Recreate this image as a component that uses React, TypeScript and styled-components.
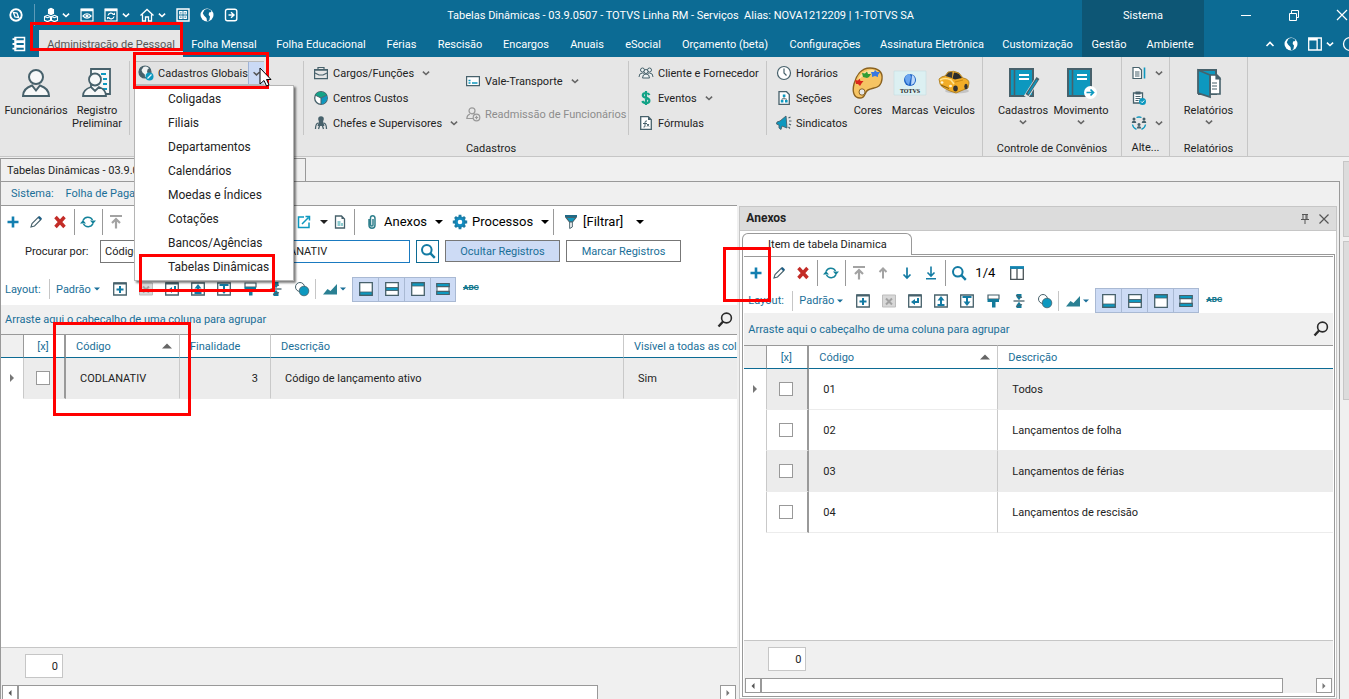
import React from "react";
import styled, { createGlobalStyle, css } from "styled-components";

const blue = "#0c6b94";
const link = "#1a6f98";
const teal = "#0d98bf";
const slate = "#47616b";
const green = "#12a387";
const uiFont = `Roboto, "Noto Sans", sans-serif`;

const GlobalStyle = createGlobalStyle`
  * { box-sizing: border-box; }
  body { margin: 0; background: #f0f0f0; color: #222; font: 11px/15px ${uiFont}; overflow: hidden; }
  button, input, select { font: inherit; color: inherit; margin: 0; padding: 0; }
  button { background: none; border: 0; white-space: nowrap; }
  svg { display: block; flex: none; overflow: visible; }
  ul { list-style: none; margin: 0; padding: 0; }
`;

/* ---------- icons ---------- */

const art: Record<string, React.ReactNode> = {
  compass: <g fill="none" stroke="#fff"><circle cx="8" cy="8" r="5.700" strokeWidth="1.900" /><path d="M5.300 5.300l3.700.8 1.700 4.600-3.700-.8z" strokeWidth="1.300" /></g>,
  cubes: <g stroke="#fff" strokeWidth="1.1" fill="none"><path d="M5.500 2.500L8 1.300l2.500 1.200v4L8 7.700 5.500 6.500z" fill="#fff" /><path d="M1.500 9.500L4.500 8.300l3 1.200v3.800L4.500 14.600l-3-1.300zM8.500 9.500l3-1.200 3 1.200v3.800l-3 1.300-3-1.300zM1.500 9.500l3 1.200 3-1.200M8.500 9.500l3 1.200 3-1.200" /></g>,
  eyeWin: <g fill="none" stroke="#fff" strokeWidth="1.2"><path d="M2 2h12v12H2z" /><path d="M2 3h12" strokeWidth="2.500" /><path d="M4 9q4-4.500 8 0q-4 4.500-8 0z" /><circle cx="8" cy="9" r="1" fill="#fff" /></g>,
  syncWin: <g fill="none" stroke="#fff" strokeWidth="1.2"><path d="M2 2h12v12H2z" /><path d="M2 3h12" strokeWidth="2.500" /><path d="M5 8.500a3 3 0 0 1 5.500-1M11 9.500a3 3 0 0 1-5.500 1" /><path d="M9 8h3V5.500zM7 10H4v2.500z" fill="#fff" stroke="none" /></g>,
  home: <g fill="none" stroke="#fff" strokeWidth="1.300"><path d="M1.500 8.500L8 2.500l6.500 6M3.500 7.500V14h3v-4h3v4h3V7.500" /></g>,
  grid: <g fill="none" stroke="#fff" strokeWidth="1.4"><path d="M2 2h12v12H2z" /><path d="M4.700 4.700h2.300V7H4.700zM9 4.700h2.300V7H9zM4.700 9h2.300v2.300H4.700zM9 9h2.300v2.300H9z" strokeWidth="1.200" /></g>,
  globe: <g><circle cx="8" cy="8" r="6.500" fill="#fff" /><path d="M5.500 2.800Q9 1 12 3.500L12.300 5l-2.300.5-.3 2.500 1.300 1.500-.7 4L8 14.300 7.500 11 5 8.500 3.800 6.300z" fill={blue} /></g>,
  exit: <g fill="none" stroke="#fff" strokeWidth="1.4"><path d="M4.500 2.200h7.300a2 2 0 0 1 2 2v7.600a2 2 0 0 1-2 2H4.500a2 2 0 0 1-2-2V4.200a2 2 0 0 1 2-2zM5.500 8h5M8 5.300L11 8l-3 2.700" /></g>,
  book: <g fill="none" stroke="#fff" strokeWidth="1.500"><path d="M4 1.500h9.500v3.500H4zM4 6.300h9.500v3.500H4zM4 11h9.500v3.500H4z" /><path d="M1.500 3.200h4M1.500 8h4M1.500 12.700h4" strokeWidth="1.800" /></g>,
  panelWin: <g><path d="M1.700 2h12.600v12H1.700z" fill="none" stroke="#fff" strokeWidth="1.3" /><path d="M2 2h8v2.500H2zM9.500 2h1.300v12H9.500z" fill="#fff" /></g>,
  help: <circle cx="8" cy="8" r="6.500" fill="none" stroke="#fff" strokeWidth="1.3" />,
  minimize: <path d="M3 8.500h10" stroke="#fff" fill="none" />,
  restore: <path d="M3.500 6.500h7v7h-7zM5.500 6.500v-3h7v7h-2" stroke="#fff" fill="none" />,
  close: <path d="M3 3l10 10M13 3L3 13" stroke="#fff" strokeWidth="1.2" fill="none" />,
  up: <path d="M4.500 10L8 6.500l3.500 3.500" stroke="#fff" strokeWidth="1.6" fill="none" />,
  world: <g><circle cx="7" cy="7" r="6" fill={slate} stroke={slate} strokeWidth="1.2" /><path d="M5.500 2Q9 .8 11 3.200L9.500 4.500 9 7l1 1.500L8.500 12H7L6.800 9.500 4.500 7.500 3.500 5z" fill="#eef2f3" /><circle cx="11.500" cy="11.500" r="4" fill={teal} /><path d="M9.500 13.500l4-4" stroke="#e8f6fa" strokeWidth="1.2" /></g>,
  briefcase: <g fill="none" stroke={slate} strokeWidth="1.2"><path d="M1.600 4.600h12.800v9H1.600zM5 4.500V2.500h6v2M1.600 5.200h12.800" /><path d="M2 8l4 2h4l4-2" /></g>,
  pie: <g><circle cx="8" cy="8" r="6.300" fill="#fff" stroke={slate} strokeWidth="1.300" /><path d="M8 8L2 5Q5 1.500 8 1.700 12 2 14 5z" fill={green} /><path d="M8 8l6-3q1.500 6-4 9H8z" fill={teal} /><path d="M2 5l6 3 6-3M8 8v6" fill="none" stroke={slate} /></g>,
  boss: <g fill={slate}><circle cx="8" cy="4" r="2.800" /><path d="M6 6h4l1.500 5h-7z" /><path d="M5 8q-2.500 1-2.500 6M11 8q2.500 1 2.500 6M7 9.500L5.500 14M9 9.500l1.500 4.500" fill="none" stroke={slate} strokeWidth="1.300" /></g>,
  card: <g><path d="M1.600 3.600h12.800v9H1.600z" fill="#fff" stroke={slate} strokeWidth="1.200" /><path d="M3.500 7.500h2M3.500 10h2M7 10h5.500" stroke={teal} strokeWidth="1.300" /></g>,
  rehire: <g fill="none" stroke="#999" strokeWidth="1.200"><circle cx="7" cy="4.800" r="3" /><path d="M8 12.500H1.800Q2 9 5 8M9 8l1.500.8" /><circle cx="11.500" cy="11.500" r="3.300" /><path d="M9.800 11.500h3.400M11.500 9.800v3.400" /></g>,
  people: <g fill="#eef2f3" stroke={slate}><circle cx="4.500" cy="5" r="2" /><circle cx="11.500" cy="5" r="2" /><path d="M1 12q0-4 3.500-4 1.500 0 2 1M15 12q0-4-3.500-4-1.500 0-2 1" /><circle cx="8" cy="6.500" r="2" /><path d="M4.500 13q0-4 3.500-4t3.500 4z" /></g>,
  dollar: <path d="M11.500 5Q10.500 3 8 3 4.800 3 4.800 5.300 4.800 7.200 8 7.900q3.400.8 3.400 2.800Q11.400 13 8 13q-2.800 0-3.700-2M8 1v14" fill="none" stroke={green} strokeWidth="2.200" />,
  formula: <g><path d="M2.700 1.700h7.600l3 3v9.600H2.700z" fill="#fff" stroke={slate} strokeWidth="1.300" /><path d="M10 1.500v3.500h3.500z" fill={slate} /><path d="M9 6q-2-.5-2 1.500v3.500q0 1.500-1.500 1M5 8.500h4M9 9l2 2.500M11 9l-2 2.500" fill="none" stroke={slate} /></g>,
  clock: <g fill="#fff" stroke={slate} strokeWidth="1.200"><circle cx="8" cy="8" r="6.500" /><path d="M8 3.500V8l2.500 2.500" fill="none" /></g>,
  section: <g><path d="M3 1.700h7.500l2.800 2.800v9.800H3z" fill="#fff" stroke={slate} strokeWidth="1.300" /><path d="M6.800 4.500h2.600v2.600H6.800zM4.800 10h2.600v2.600H4.800zM9 10h2.600v2.600H9z" fill={teal} /><path d="M8 7v2M6 10V8.800h4.300V10" fill="none" stroke={slate} strokeWidth=".8" /></g>,
  horn: <g><path d="M1 7l3-1 6-5 1 12-5-2-1 3.500L3 13v-3L.5 9z" fill={teal} stroke={slate} strokeWidth=".9" /><path d="M12.500 3l2-1M13 6h2.500M13 9l2 1M12.500 12l1.500 1.500" stroke={slate} strokeWidth="1.200" /></g>,
  docEdit: <g><path d="M2 2.500h6l2.500 2.500v8.500H2z" fill="#fff" stroke={slate} strokeWidth="1.200" /><path d="M4 7h4.500M4 9h4.500M4 11h4.500" stroke={slate} /><path d="M13.500 2.500v11" stroke={teal} strokeWidth="1.600" /></g>,
  docCheck: <g><path d="M2.500 3h9v10h-9z" fill="#fff" stroke={slate} strokeWidth="1.300" /><path d="M4.500 1.500h5v3h-5z" fill={slate} /><path d="M4.500 6.500h5M4.500 8.500h5M4.500 10.500h3" stroke={slate} /><circle cx="11.500" cy="11.500" r="3.500" fill={teal} /><path d="M10 11.500l1.200 1.200 2-2.200" fill="none" stroke="#fff" /></g>,
  team: <g fill="none" stroke={teal} strokeWidth="1.300"><path d="M5.500 2.500q2.500-1 5 0M1.500 9.500q.5 3.500 4 4.800M14.500 9.500q-.5 3.500-4 4.800" /><g fill={slate} stroke="none"><circle cx="3" cy="4" r="1.500" /><path d="M.7 8q0-2.500 2.300-2.500T5.300 8z" /><circle cx="13" cy="4" r="1.500" /><path d="M10.700 8q0-2.500 2.300-2.500T15.300 8z" /><circle cx="8" cy="9.500" r="1.500" /><path d="M5.700 13.500q0-2.500 2.300-2.500t2.300 2.500z" /></g></g>,
  plus: <path d="M8 2.500v11M2.500 8h11" stroke="#137fb0" strokeWidth="2.600" fill="none" />,
  pencil: <g><path d="M3 13l1-3.500 6.500-6.500 2.500 2.500L6.500 12z" fill="#fff" stroke={slate} strokeWidth="1.100" /><path d="M9.800 3.700l1.700-1.700 2.500 2.500-1.700 1.700z" fill="#1e5f86" /></g>,
  remove: <path d="M3.500 3l9 10M12.500 3l-9 10" stroke="#c32c27" strokeWidth="3.400" fill="none" />,
  refresh: <g fill="none" stroke="#14829a" strokeWidth="1.500"><path d="M3 6.500A5.300 5.300 0 0 1 12.500 6M13 9.500A5.300 5.300 0 0 1 3.500 10" /><path d="M10 6.500h6l-3 3.500zM0 9.500h6L3 6z" fill="#14829a" stroke="none" /></g>,
  first: <g stroke="#a3a3a3" fill="none"><path d="M2 2h12" strokeWidth="2" /><path d="M8 5v9.500M4 9l4-4 4 4" strokeWidth="2.200" /></g>,
  prev: <path d="M8 3.500v10M4.500 7L8 3.500 11.500 7" stroke="#a3a3a3" strokeWidth="2" fill="none" />,
  next: <path d="M8 2.500v10M4.500 9.500L8 13l3.500-3.500" stroke="#137ba3" strokeWidth="1.700" fill="none" />,
  last: <path d="M8 1.500v9M4.500 7.500L8 11l3.500-3.500M3 13.800h10" stroke="#137ba3" strokeWidth="1.600" fill="none" />,
  search: <g fill="none" stroke="#137ba3"><circle cx="6.800" cy="6.800" r="4.800" strokeWidth="2" /><path d="M10.200 10.200l4.600 4.600" strokeWidth="2.400" /></g>,
  columns: <g fill="none" stroke="#4a5357" strokeWidth="1.300"><path d="M1.700 3h12.600v11.300H1.700zM8 3v11" fill="#fff" /><path d="M1 2.500h14" stroke="#1384b0" strokeWidth="2.800" /></g>,
  export: <g fill="none" stroke={teal} strokeWidth="1.500"><path d="M8 3H2.500v10.500H13V8.500M6 10l6.500-6.500M9.500 2.500h4v4" /></g>,
  doc: <g><path d="M3.500 2h6l3 3v9h-9z" fill="#fff" stroke={slate} strokeWidth="1.300" /><path d="M9.500 2v3h3z" fill={slate} /><path d="M5.500 7h3v5h-3zM9 9h2v3H9z" fill="#8ccbd0" /></g>,
  clip: <path d="M5 5v6q0 3.200 3 3.200t3-3.200V4.500Q11 1.800 8.700 1.800T6.500 4v6.500q0 1.500 1.300 1.500T9 10.500V5" fill="none" stroke="#2f7f8c" strokeWidth="1.500" />,
  gear: <g><circle cx="8" cy="8" r="4" fill="none" stroke="#118bc0" strokeWidth="3.400" /><path d="M8 .8v3M8 12.200v3M.8 8h3M12.200 8h3M3 3l1.800 1.800M11.200 11.200L13 13M13 3l-1.800 1.800M4.800 11.200L3 13" stroke="#1b7ba3" strokeWidth="2.800" /></g>,
  funnel: <g><path d="M3 3.500h10L9.500 8H6.500z" fill={teal} stroke={slate} strokeWidth="1.100" /><path d="M2 2h12" stroke="#206a86" strokeWidth="2" /><path d="M6.700 8h2.600v5l-2.600 1.500z" fill="#fff" stroke={slate} /></g>,
  pin: <path d="M5 3.500h6M6 3.500v5M10 3.500v5M9 4v4M4 8.500h8M8 8.500v4.500" stroke="#555" fill="none" />,
  xGray: <path d="M3.500 3.500l9 9M12.500 3.500l-9 9" stroke="#555" strokeWidth="1.200" fill="none" />,
  boxPlus: <g><path d="M1.700 2h12.600v12H1.700z" fill="#fff" stroke={slate} strokeWidth="1.300" /><path d="M2 2.500h12" stroke={slate} strokeWidth="2" /><path d="M8 5v7M4.500 8.500h7" stroke="#137ba3" strokeWidth="2" /></g>,
  boxX: <g><path d="M1.500 2h13v12h-13z" fill="#d8d8d8" stroke="#bdbdbd" /><path d="M5 5.500l6 6M11 5.500l-6 6" stroke="#a2a2a2" strokeWidth="2" /></g>,
  boxBack: <g><path d="M1.700 2h12.600v12H1.700z" fill="#fff" stroke={slate} strokeWidth="1.300" /><path d="M2 2.500h12" stroke={slate} strokeWidth="2" /><path d="M11 5v4H6" fill="none" stroke="#137ba3" strokeWidth="2" /><path d="M8 6v6L4 9z" fill="#137ba3" /></g>,
  boxUp: <g><path d="M1.700 2h12.600v12H1.700z" fill="#fff" stroke={slate} strokeWidth="1.300" /><path d="M8 5v6M4.500 12h7" stroke="#137ba3" strokeWidth="2" /><path d="M4.500 7.500h7L8 3z" fill="#137ba3" /></g>,
  boxDown: <g><path d="M1.700 2h12.600v12H1.700z" fill="#fff" stroke={slate} strokeWidth="1.300" /><path d="M3.500 4h9M8 4v6" stroke="#137ba3" strokeWidth="2" /><path d="M4.500 8.500h7L8 13z" fill="#137ba3" /></g>,
  brush: <g><path d="M3 2h11v4H3z" fill="#fff" stroke={slate} strokeWidth="1.200" /><path d="M2.500 6h11.500V9H10.500v5.500h-3.500V9H2.500z" fill="#137b9b" /></g>,
  collapse: <g fill="#137b9b"><path d="M5.500 1h5v3l-2.500 3.300-2.500-3.300zM5.500 15h5v-3L8 8.700 5.500 12z" /><path d="M5 2.500l6 2M5 13.500l6-2" stroke={slate} strokeWidth="1.100" /><path d="M2.500 8h11" stroke={slate} strokeWidth="1.300" /></g>,
  circles: <g><circle cx="6" cy="6" r="4.500" fill="#fff" stroke={slate} /><circle cx="10" cy="10" r="4.800" fill={teal} stroke={slate} strokeWidth=".8" /></g>,
  chart: <path d="M1 13.500L5.500 8l3 2 6.500-7v10.500z" fill="#2a8093" />,
  layBottom: <g><path d="M1.700 1.700h12.600v12.600H1.700z" fill="#fff" stroke={slate} strokeWidth="1.300" /><path d="M2 11h12v3H2z" fill={teal} stroke={slate} strokeWidth=".8" /></g>,
  layMid: <g><path d="M1.700 1.700h12.600v12.600H1.700z" fill="#fff" stroke={slate} strokeWidth="1.300" /><path d="M2 6.500h12v3H2z" fill={teal} stroke={slate} strokeWidth=".9" /></g>,
  layTop: <g><path d="M1.700 1.700h12.600v12.600H1.700z" fill="#fff" stroke={slate} strokeWidth="1.300" /><path d="M2 2h12v3H2z" fill={teal} stroke={slate} strokeWidth=".8" /></g>,
  layBoth: <g><path d="M2 5h12v6H2z" fill="#fff" stroke={slate} /><path d="M1.700 2.500h12.600v3.200H1.700zM1.700 10.300h12.600v3.200H1.700z" fill={teal} stroke={slate} strokeWidth="1.200" /></g>,
  find: <g fill="none" stroke="#2b2b2b"><circle cx="9.500" cy="6" r="4.900" strokeWidth="1.600" /><path d="M6.300 9.300L1.500 14.500" strokeWidth="2.400" /></g>,
  chevron: <path d="M4.900 6.700L8 9.500l3.100-2.800" stroke="currentColor" strokeWidth="1.600" fill="none" />,
  caret: <path d="M4 6h8l-4 4z" fill="currentColor" />,
  sortUp: <path d="M3 10.500h10L8 5.500z" fill="#666" />,
  rowMark: <path d="M6 4l4 4-4 4z" fill="#777" />,
  backMark: <path d="M10 4L6 8l4 4z" fill="#555" />,
};

const bigArt: Record<string, React.ReactNode> = {
  person: <g fill="#f7f8f8" stroke={slate} strokeWidth="2"><circle cx="16" cy="10" r="7" /><path d="M3 29q0-7.500 9-10.500l4 5 4-5q9 3 9 10.500z" /></g>,
  register: <g fill="#f7f8f8" stroke={slate} strokeWidth="1.800"><path d="M10 2h19v25H10z" /><path d="M20 7h5M22 12h4M22 17h4M22 22h4" stroke={teal} strokeWidth="2" /><circle cx="14" cy="12.500" r="6" /><path d="M2 29q0-6.500 8-9l4 4 4-4q7 2.500 7 9z" /></g>,
  palette: <g><path d="M18 1C9 1 4 9 2 17c-2 8 0 14 6 14 6 0 4-6 8-8 6-3 13-1 14-11C31 5 26 1 18 1z" fill="#f6c463" stroke="#8a6220" strokeWidth="1.400" /><path d="M18 3C11 4 7 9 6 13q8-8 21-7-4-4-9-3z" fill="#fbe2a0" /><ellipse cx="10" cy="25" rx="3" ry="3.200" fill="#e6e6e6" stroke="#8a6220" /><path d="M3 13l3 .5 1.500-2 1 2.500 3 0-2 2.500-1.500 2.500-2-2-2 0z" fill="#d9261c" /><path d="M10 6l3 .5 2-2 1 2.500 3 0-2 3-2 1-4-1z" fill="#2f9d34" /><path d="M19 5l3 0 1-2 2 2 3 0-2 3 0 2-3-1-3 1 0-2z" fill="#3978e0" /></g>,
  totvs: <g><path d="M0 4h32v24H0z" fill="#dcf0f2" stroke="#c7dde0" strokeWidth=".6" /><circle cx="16" cy="13" r="6" fill="#1d62c4" /><path d="M11 11q1-4 5-4l1 3-2 8q-4-2-4-7z" fill="#6aa6f0" /><path d="M18 8q3 1 3 5t-4 5z" fill="#bcd9fa" /><text x="16" y="26" textAnchor="middle" fontFamily="Liberation Serif, serif" fontSize="6" fontWeight="700" fill="#222">TOTVS</text></g>,
  car: <g><ellipse cx="19" cy="24" rx="12" ry="2.500" fill="#c4c4c4" /><path d="M1 12q3-3 6-3l3-4q6-2 11 1l4 5q6 1 6 5l-1 5-5 2-7 3-6-2Q3 20 2 17z" fill="#f2ad27" stroke="#a87818" strokeWidth=".8" /><path d="M7.500 9l3-3.500q2-.8 4-.3L14 11z" fill="#3a3a38" /><path d="M16 5.500q3 .3 5 1.500l3 4-7 1.500-2.500-1z" fill="#2b2b2a" /><path d="M2 13q5-3 11 0l3 4" stroke="#ffe28c" strokeWidth="1.600" fill="none" /><path d="M17 15l8-2" stroke="#c98a14" /><ellipse cx="4" cy="15.500" rx="1.400" ry="1.200" fill="#fff6d4" /><ellipse cx="12.500" cy="19" rx="1.500" ry="1.300" fill="#fff6d4" /><ellipse cx="17.500" cy="21.500" rx="2.300" ry="3" fill="#333" /><ellipse cx="28" cy="19.500" rx="1.700" ry="2.700" fill="#333" /><path d="M3 18l8 3.500" stroke="#8d6210" strokeWidth="1.200" /></g>,
  ledgerPen: <g><path d="M3 2h23v27H3z" fill={teal} stroke={slate} strokeWidth="2" /><path d="M7.500 2v27" stroke={slate} strokeWidth="1.600" /><path d="M12 8h10M12 12h10" stroke="#fff" strokeWidth="2" /><path d="M31 11L19 30" stroke="#e6e6e6" strokeWidth="5" /><path d="M31 11L20 28" stroke={slate} strokeWidth="3.400" /><path d="M30 13L21 27" stroke={teal} strokeWidth="1.400" /></g>,
  ledgerGo: <g><path d="M3 2h23v27H3z" fill={teal} stroke={slate} strokeWidth="2" /><path d="M7.500 2v27" stroke={slate} strokeWidth="1.600" /><path d="M12 8h10M12 12h10" stroke="#fff" strokeWidth="2" /><circle cx="25.500" cy="25.500" r="6.500" fill="#fff" /><path d="M21.500 25.500h7M25.500 22.500l3 3-3 3" fill="none" stroke={teal} strokeWidth="1.700" /></g>,
  folder: <g><path d="M6 3h17v24H6z" fill={teal} stroke={slate} strokeWidth="2" /><path d="M17 8h7l3 3v16H17z" fill="#fff" stroke={slate} strokeWidth="1.600" /><path d="M23 8v4h4zM19 16h5M19 19h5M19 22h5" fill={slate} stroke={slate} strokeWidth="1.200" /><path d="M5 3l12 5v22L5 26z" fill={teal} stroke={slate} strokeWidth="1.800" /></g>,
};

const Icon = ({ name, size = 16 }: { name: string; size?: number }) => (
  <svg width={size} height={size} viewBox="0 0 16 16" aria-hidden="true">{art[name]}</svg>
);
const BigIcon = ({ name }: { name: string }) => (
  <svg width="32" height="32" viewBox="0 0 32 32" aria-hidden="true">{bigArt[name]}</svg>
);

/* ---------- application frame ---------- */

const Shell = styled.div`position: relative; height: 100vh; display: flex; flex-direction: column; overflow: hidden;`;
const Header = styled.header`
  display: grid; grid-template-columns: minmax(0, 1fr) 122px 145px; grid-template-rows: 30px 27px;
  background: ${blue}; color: #fff; flex: none;
`;
const HeaderRow = styled.div<{ $dark?: boolean; $end?: boolean }>`
  display: flex; align-items: center; min-width: 0; overflow: hidden;
  ${(p) => p.$dark && css`background: #0d5675; justify-content: center;`}
  ${(p) => p.$end && css`justify-content: flex-end;`}
`;
const QuickBar = styled.div`display: flex; align-items: center; padding-left: 8px; flex: none;`;
const QuickButton = styled.button<{ $gap?: number }>`
  width: 16px; height: 20px; flex: none; display: flex; align-items: center; justify-content: center;
  margin-left: ${(p) => p.$gap ?? 0}px;
`;
const QuickRule = styled.span`width: 1px; height: 22px; background: #5d9bb8; margin: 0 8px 0 10px;`;
const Title = styled.h1`flex: 1; margin: 0; padding-left: 40px; text-align: center; font: inherit; white-space: pre;`;
const WindowButton = styled.button`width: 48px; height: 30px; flex: none; display: grid; place-items: center;`;
const WindowButtons = styled.div`display: flex; flex: none; margin-right: -17px;`;
const HelpBar = styled.div`display: flex; align-items: center; flex: none; margin-right: -9px;`;
const AppMenu = styled.button`width: 39px; height: 27px; flex: none; padding-left: 11px;`;
const Tab = styled.button<{ $w: number; $active?: boolean }>`
  width: ${(p) => p.$w}px; height: 27px; padding-top: 1px; flex: none; text-align: center;
  ${(p) => p.$active && css`background: #e6e6e6; color: #555;`}
`;

/* ---------- ribbon ---------- */

const Ribbon = styled.div`display: flex; height: 100px; flex: none; background: #e6e6e6; border-bottom: 1px solid #c6c6c6;`;
const Group = styled.section<{ $w: number }>`
  width: ${(p) => p.$w}px; flex: none; display: flex; flex-direction: column; padding-top: 4px;
  border-right: 1px solid #c6c6c6;
`;
const GroupBody = styled.div<{ $center?: boolean }>`display: flex; height: 80px; ${(p) => p.$center && css`justify-content: center;`}`;
const GroupLabel = styled.div`text-align: center; line-height: 16px;`;
const Rule = styled.span<{ $ml?: number }>`width: 1px; height: 74px; background: #c6c6c6; margin-left: ${(p) => p.$ml ?? 0}px; flex: none;`;
const BigButton = styled.button<{ $w: number }>`
  width: ${(p) => p.$w}px; flex: none; display: flex; flex-direction: column; align-items: center; padding-top: 6px;
  line-height: 13px; white-space: pre-line; gap: 5px; height: 80px;
  & > svg:last-child:not(:first-child) { margin-top: -8px; color: #666; }
`;
const Stack = styled.div<{ $w: number; $loose?: boolean }>`
  width: ${(p) => p.$w}px; flex: none; display: grid; align-content: start; justify-items: start;
  grid-auto-rows: ${(p) => (p.$loose ? 33 : 25)}px; padding: ${(p) => (p.$loose ? "8px" : "0")} 0 0 9px;
`;
const SmallButton = styled.button`
  display: flex; align-items: center; gap: 4px; height: 24px;
  &:disabled { color: #8d8d8d; }
  & > svg:last-child { color: #666; }
`;
const SplitWrap = styled.div`position: relative; width: 173px; padding-left: 5px; flex: none;`;
const Split = styled.div`display: flex; width: 129px; height: 24px; border: 1px solid #b9b9b9; background: #e2e2e2;`;
const SplitMain = styled.button`flex: 1; display: flex; align-items: center; gap: 4px; padding-left: 2px;`;
const SplitArrow = styled.button`width: 16px; background: #cbdaf5; border-left: 1px solid #9fb3d6; color: #555;`;
const Menu = styled.ul`
  position: absolute; z-index: 5; top: 24px; left: 4px; width: 160px; padding: 1px 0; background: #fff;
  border: 1px solid #b5b5b5; box-shadow: 2px 2px 2px rgba(0, 0, 0, 0.5); font-size: 12px;
`;
const MenuItem = styled.button`display: block; width: 100%; height: 24px; padding-left: 33px; text-align: left;`;

/* ---------- document area ---------- */

const Desktop = styled.main`flex: 1; min-height: 0; display: flex; padding-top: 1px;`;
const DocumentArea = styled.div`flex: 1; min-width: 0; display: flex; flex-direction: column;`;
const DocTab = styled.div`width: 306px; height: 23px; padding: 4px 6px; border: 1px solid #999; border-bottom: 0;`;
const DocFrame = styled.div`flex: 1; min-height: 0; display: flex; flex-direction: column; border: 1px solid #999; border-bottom: 0;`;
const Crumbs = styled.nav`display: flex; gap: 12px; height: 23px; padding: 4px 10px; color: ${link};`;
const Panes = styled.div`flex: 1; min-height: 0; display: flex;`;
const Pane = styled.section`
  flex: 738 1 0; min-width: 0; display: flex; flex-direction: column; background: #fff; border-top: 1px solid #999;
`;
const SidePane = styled.section`
  flex: 597 1 0; min-width: 0; display: flex; flex-direction: column; background: #fff;
  border: 1px solid #c6c6c6; margin: 1px 2px 0 2px;
`;
const SideHead = styled.header`
  display: flex; align-items: center; height: 24px; flex: none; padding: 0 3px 0 6px; background: #dcdcdc; border-bottom: 1px solid #c6c6c6;
  h2 { flex: 1; margin: 0; font: inherit; font-size: 12px; font-weight: 700; }
`;
const SideTabs = styled.div`display: flex; padding: 2px 1px 0 2px; flex: none;`;
const SideTab = styled.button`width: 170px; height: 22px; border: 1px solid #999; border-bottom: 0; border-radius: 6px 6px 0 0;`;
const SideTabRest = styled.span`flex: 1; border-bottom: 1px solid #999;`;
const SideFrame = styled.div`
  flex: 1; min-height: 0; display: flex; flex-direction: column; margin: 0 1px 1px 2px; border: 1px solid #999; border-top: 0; padding: 1px 1px 3px;
`;
const SideInner = styled.div`flex: 1; min-height: 0; display: flex; flex-direction: column; border-top: 1px solid #999;`;
const ToolRow = styled.div<{ $h: number; $pt?: number }>`
  display: flex; align-items: center; height: ${(p) => p.$h}px; padding-top: ${(p) => p.$pt ?? 0}px; flex: none; overflow: hidden;
`;
const Tool = styled.button<{ $w?: number; $ml?: number }>`
  width: ${(p) => p.$w ?? 24}px; height: 24px; flex: none; display: grid; place-items: center; margin-left: ${(p) => p.$ml ?? 0}px;
`;
const TextTool = styled.button<{ $w: number }>`
  width: ${(p) => p.$w}px; flex: none; display: flex; align-items: center; gap: 4px; padding-left: 8px; font-size: 13px; color: #000;
  span { flex: 1; text-align: left; }
`;
const ToolRule = styled.span`width: 1px; height: 26px; background: #999; margin: 0 1px 0 2px; flex: none;`;
const Position = styled.span`width: 34px; flex: none; padding-left: 4px; font-size: 13px; color: #000;`;
const SearchRow = styled.div`display: flex; align-items: center; height: 28px; flex: none; padding-left: 24px; label { width: 75px; }`;
const FieldSelect = styled.select`appearance: none; width: 150px; height: 23px; border: 1px solid #777; border-radius: 0; background: #fff; padding-left: 4px;`;
const SearchInput = styled.input`width: 154px; height: 23px; margin-left: 6px; border: 1px solid #1a7ac0; padding-left: 4px;`;
const IconBox = styled.button`width: 23px; height: 23px; margin-left: 6px; border: 1px solid ${blue}; display: grid; place-items: center;`;
const PushButton = styled.button<{ $on?: boolean }>`
  width: 115px; height: 22px; margin-left: 6px; border: 1px solid #777; color: ${link}; background: ${(p) => (p.$on ? "#cddbf5" : "#fff")};
`;
const LayoutLabel = styled.span`width: 46px; padding-left: 4px; color: ${link}; flex: none;`;
const LayoutRule = styled.span<{ $l?: number }>`width: 1px; height: 20px; background: #c6c6c6; margin: 0 6px 0 ${(p) => p.$l ?? 2}px; flex: none;`;
const LayoutMenu = styled.button`width: 51px; display: flex; align-items: center; color: ${link}; flex: none;`;
const ChartTool = styled.button`width: 30px; height: 24px; flex: none; display: flex; align-items: center; color: ${link}; svg + svg { margin-left: -1px; }`;
const Toggle = styled.button`
  width: 26px; height: 25px; flex: none; background: #cddbf5; border: 1px solid #a9b9d3; border-right-width: 0;
  display: grid; place-items: center;
  &:nth-last-child(2) { border-right-width: 1px; }
`;
const Abc = styled.button`margin-left: 7px; font-size: 8px; line-height: 8px; font-weight: 900; color: #17798f; text-decoration: line-through; padding-bottom: 2px;`;
const GroupPanel = styled.div<{ $h: number }>`
  display: flex; align-items: center; justify-content: space-between; height: ${(p) => p.$h}px; flex: none;
  padding: 0 4px; background: #f0f0f0; color: ${link};
`;
const GridArea = styled.div`flex: 1; min-height: 0; overflow: hidden;`;
const Grid = styled.table`
  width: 100%; table-layout: fixed; border-collapse: separate; border-spacing: 0;
  th, td { padding: 0 10px; text-align: left; font-weight: 400; border-right: 1px solid #c9c9c9; white-space: nowrap; overflow: hidden; }
  th { height: 24px; color: ${link}; border-top: 1px solid #999; border-bottom: 1px solid ${blue}; background: #fff; }
  td { height: 41px; padding-left: 14px; background: #fff; border-bottom: 1px solid #ececec; }
  th:first-child { background: #f0f0f0; border-right-color: #999; }
  tr > :first-child { padding: 0 3px; }
  tr > :nth-child(2) { padding: 0 2px 0 0; text-align: center; border-right: 2px solid #999; }
  tr > :last-child { border-right: 0; }
  tbody tr:nth-child(odd) td:not(:first-child) { background: #ececec; }
  tbody tr > td:first-child { border-bottom-color: #fff; }
  tbody tr td.focus.focus { background: #fff; border-bottom-color: #ececec; }
`;
const NumberCell = styled.td`&&& { text-align: right; padding-right: 12px; }`;
const SortHead = styled.span`display: flex; justify-content: space-between; align-items: center; margin-right: -6px; color: ${link};`;
const Check = styled.input`appearance: none; display: block; width: 14px; height: 14px; margin: 0 auto; border: 1px solid #999; background: #fff;`;
const Footer = styled.div`height: 38px; flex: none; padding: 6px 24px; background: #f0f0f0; border-top: 1px solid #c6c6c6;`;
const Total = styled.output`display: block; width: 38px; height: 24px; padding: 4px 4px; text-align: right; background: #fff; border: 1px solid #c6c6c6;`;
const ScrollTrack = styled.div<{ $h: number }>`display: flex; height: ${(p) => p.$h}px; flex: none; background: #f0f0f0; padding: 0 1px; overflow: hidden;`;
const ScrollButton = styled.button`width: 16px; height: 15px; border: 1px solid #999; background: #fff; display: grid; place-items: center; flex: none;`;
const ScrollThumb = styled.span<{ $part: number }>`width: ${(p) => p.$part}%; height: 15px; border: 1px solid #999; background: #fff;`;
const Spacer = styled.span`flex: 1;`;
const Dock = styled.aside`width: 6px; margin-left: 3px; padding-top: 3px; flex: none; display: flex; flex-direction: column; gap: 4px;`;
const DockTab = styled.button<{ $h: number }>`height: ${(p) => p.$h}px; background: #dcdcdc; border: 1px solid #c6c6c6; border-right: 0;`;

/* ---------- tutorial marks ---------- */

const Mark = styled.div<{ $x: number; $y: number; $w: number; $h: number }>`
  position: absolute; z-index: 8; pointer-events: none; border: 3px solid #f00;
  left: ${(p) => p.$x}px; top: ${(p) => p.$y}px; width: ${(p) => p.$w}px; height: ${(p) => p.$h}px;
`;
const Cursor = styled.svg`position: absolute; z-index: 9; left: 259px; top: 67px; pointer-events: none;`;

const tabs: [string, number][] = [
  ["Folha Mensal", 82], ["Folha Educacional", 112], ["Férias", 49], ["Rescisão", 68], ["Encargos", 64], ["Anuais", 58],
  ["eSocial", 54], ["Orçamento (beta)", 110], ["Configurações", 90], ["Assinatura Eletrônica", 124], ["Customização", 87],
];
const menuItems = ["Coligadas", "Filiais", "Departamentos", "Calendários", "Moedas e Índices", "Cotações", "Bancos/Agências", "Tabelas Dinâmicas"];

const Small = ({ icon, children, more, disabled }: { icon: string; children: string; more?: boolean; disabled?: boolean }) => (
  <SmallButton disabled={disabled}><Icon name={icon} /><span>{children}</span>{more && <Icon name="chevron" />}</SmallButton>
);
const Big = ({ icon, children, w, more }: { icon: string; children: string; w: number; more?: boolean }) => (
  <BigButton $w={w}><BigIcon name={icon} /><span>{children}</span>{more && <Icon name="chevron" />}</BigButton>
);
const QuickIcon = ({ name, label, gap }: { name: string; label: string; gap?: number }) => (
  <QuickButton $gap={gap} aria-label={label}><Icon name={name} /></QuickButton>
);
const IconTool = ({ name, label, w, ml }: { name: string; label: string; w?: number; ml?: number }) => (
  <Tool $w={w} $ml={ml} aria-label={label}><Icon name={name} /></Tool>
);

const RecordTools = ({ position }: { position: string }) => (
  <>
    <IconTool name="plus" label="Incluir" w={23} />
    <IconTool name="pencil" label="Editar" />
    <IconTool name="remove" label="Excluir" />
    <ToolRule />
    <IconTool name="refresh" label="Atualizar" />
    <ToolRule />
    <IconTool name="first" label="Primeiro" />
    <IconTool name="prev" label="Anterior" />
    <IconTool name="next" label="Próximo" />
    <IconTool name="last" label="Último" />
    <ToolRule />
    <IconTool name="search" label="Localizar" />
    <Position>{position}</Position>
    <IconTool name="columns" label="Colunas" />
  </>
);

const layoutIcons: [string, string][] = [
  ["boxPlus", "Novo layout"], ["boxX", "Excluir layout"], ["boxBack", "Restaurar layout"], ["boxUp", "Exportar layout"],
  ["boxDown", "Importar layout"], ["brush", "Formatar"], ["collapse", "Recolher grupos"], ["circles", "Agrupar"],
];
const viewIcons: [string, string][] = [["layBottom", "Rodapé"], ["layMid", "Linha"], ["layTop", "Cabeçalho"], ["layBoth", "Ambos"]];

const LayoutTools = () => (
  <>
    <LayoutLabel>Layout:</LayoutLabel>
    <LayoutRule />
    <LayoutMenu>Padrão<Icon name="caret" size={12} /></LayoutMenu>
    {layoutIcons.map(([n, l]) => <IconTool key={n} name={n} label={l} w={26} />)}
    <LayoutRule $l={0} />
    <ChartTool aria-label="Gráfico"><Icon name="chart" /><Icon name="caret" size={12} /></ChartTool>
    {viewIcons.map(([n, l]) => <Toggle key={n} aria-label={l}><Icon name={n} /></Toggle>)}
    <Abc>ABC</Abc>
  </>
);

const Scroll = ({ height, part }: { height: number; part: number }) => (
  <ScrollTrack $h={height}>
    <ScrollButton aria-label="Rolar para a esquerda"><Icon name="backMark" size={12} /></ScrollButton>
    <ScrollThumb $part={part} />
    <Spacer />
    <ScrollButton aria-label="Rolar para a direita"><Icon name="rowMark" size={12} /></ScrollButton>
  </ScrollTrack>
);

const attachments = [["01", "Todos"], ["02", "Lançamentos de folha"], ["03", "Lançamentos de férias"], ["04", "Lançamentos de rescisão"]];

export default function App() {
  return (
    <Shell>
      <GlobalStyle />
      <Header>
        <HeaderRow>
          <QuickBar>
            <QuickIcon name="compass" label="Início" />
            <QuickRule />
            <QuickIcon name="cubes" label="Módulos" />
            <QuickIcon name="chevron" label="Mais módulos" gap={-1} />
            <QuickIcon name="eyeWin" label="Visualizar" gap={5} />
            <QuickIcon name="syncWin" label="Sincronizar" gap={8} />
            <QuickIcon name="chevron" label="Mais sincronização" gap={-1} />
            <QuickIcon name="home" label="Página inicial" gap={5} />
            <QuickIcon name="chevron" label="Mais páginas" gap={-1} />
            <QuickIcon name="grid" label="Grade" gap={5} />
            <QuickIcon name="globe" label="Portal" gap={8} />
            <QuickIcon name="exit" label="Sair" gap={8} />
          </QuickBar>
          <Title>{"Tabelas Dinâmicas - 03.9.0507 - TOTVS Linha RM - Serviços  Alias: NOVA1212209 | 1-TOTVS SA"}</Title>
        </HeaderRow>
        <HeaderRow $dark>Sistema</HeaderRow>
        <HeaderRow $end>
          <WindowButtons>
            <WindowButton aria-label="Minimizar"><Icon name="minimize" /></WindowButton>
            <WindowButton aria-label="Restaurar"><Icon name="restore" /></WindowButton>
            <WindowButton aria-label="Fechar"><Icon name="close" /></WindowButton>
          </WindowButtons>
        </HeaderRow>
        <HeaderRow>
          <AppMenu aria-label="Menu"><Icon name="book" /></AppMenu>
          <Tab $w={144} $active>Administração de Pessoal</Tab>
          {tabs.map(([t, w]) => <Tab key={t} $w={w}>{t}</Tab>)}
        </HeaderRow>
        <HeaderRow $dark>
          <Tab $w={54}>Gestão</Tab>
          <Tab $w={68}>Ambiente</Tab>
        </HeaderRow>
        <HeaderRow $end>
          <HelpBar>
            <QuickIcon name="up" label="Recolher" />
            <QuickIcon name="globe" label="Idioma" gap={5} />
            <QuickIcon name="panelWin" label="Painéis" gap={8} />
            <QuickIcon name="chevron" label="Mais painéis" gap={-1} />
            <QuickIcon name="help" label="Ajuda" gap={4} />
          </HelpBar>
        </HeaderRow>
      </Header>

      <Ribbon>
        <Group $w={983}>
          <GroupBody>
            <Big icon="person" w={72}>Funcionários</Big>
            <Big icon="register" w={50}>{"Registro\nPreliminar"}</Big>
            <Rule $ml={7} />
            <SplitWrap>
              <Split>
                <SplitMain><Icon name="world" /><span>Cadastros Globais</span></SplitMain>
                <SplitArrow aria-label="Abrir Cadastros Globais"><Icon name="chevron" size={15} /></SplitArrow>
              </Split>
              <Menu>{menuItems.map((m) => <li key={m}><MenuItem>{m}</MenuItem></li>)}</Menu>
            </SplitWrap>
            <Rule />
            <Stack $w={152}>
              <Small icon="briefcase" more>Cargos/Funções</Small>
              <Small icon="pie">Centros Custos</Small>
              <Small icon="boss" more>Chefes e Supervisores</Small>
            </Stack>
            <Stack $w={172} $loose>
              <Small icon="card" more>Vale-Transporte</Small>
              <Small icon="rehire" disabled>Readmissão de Funcionários</Small>
            </Stack>
            <Rule />
            <Stack $w={137}>
              <Small icon="people">Cliente e Fornecedor</Small>
              <Small icon="dollar" more>Eventos</Small>
              <Small icon="formula">Fórmulas</Small>
            </Stack>
            <Rule />
            <Stack $w={80}>
              <Small icon="clock">Horários</Small>
              <Small icon="section">Seções</Small>
              <Small icon="horn">Sindicatos</Small>
            </Stack>
            <Big icon="palette" w={42}>Cores</Big>
            <Big icon="totvs" w={42}>Marcas</Big>
            <Big icon="car" w={46}>Veiculos</Big>
          </GroupBody>
          <GroupLabel>Cadastros</GroupLabel>
        </Group>
        <Group $w={139}>
          <GroupBody $center>
            <Big icon="ledgerPen" w={58} more>Cadastros</Big>
            <Big icon="ledgerGo" w={58} more>Movimento</Big>
          </GroupBody>
          <GroupLabel>Controle de Convênios</GroupLabel>
        </Group>
        <Group $w={48}>
          <GroupBody>
            <Stack $w={46}>
              <SmallButton aria-label="Alterar"><Icon name="docEdit" /><Icon name="chevron" /></SmallButton>
              <SmallButton aria-label="Conferir"><Icon name="docCheck" /></SmallButton>
              <SmallButton aria-label="Equipe"><Icon name="team" /><Icon name="chevron" /></SmallButton>
            </Stack>
          </GroupBody>
          <GroupLabel>Alte...</GroupLabel>
        </Group>
        <Group $w={78}>
          <GroupBody $center><Big icon="folder" w={60} more>Relatórios</Big></GroupBody>
          <GroupLabel>Relatórios</GroupLabel>
        </Group>
      </Ribbon>

      <Desktop>
        <DocumentArea>
          <DocTab>Tabelas Dinâmicas - 03.9.0507</DocTab>
          <DocFrame>
            <Crumbs><span>Sistema:</span><span>Folha de Pagamento</span></Crumbs>
            <Panes>
              <Pane>
                <ToolRow $h={31}>
                  <RecordTools position="1/1" />
                  <IconTool name="export" label="Exportar" w={24} ml={6} />
                  <Tool $w={12} aria-label="Opções de exportação"><Icon name="caret" /></Tool>
                  <IconTool name="doc" label="Relatório" w={24} />
                  <ToolRule />
                  <TextTool $w={88}><Icon name="clip" /><span>Anexos</span><Icon name="caret" /></TextTool>
                  <TextTool $w={107}><Icon name="gear" /><span>Processos</span><Icon name="caret" /></TextTool>
                  <ToolRule />
                  <TextTool $w={93}><Icon name="funnel" /><span>[Filtrar]</span><Icon name="caret" /></TextTool>
                </ToolRow>
                <SearchRow>
                  <label htmlFor="campo">Procurar por:</label>
                  <FieldSelect id="campo"><option>Código</option></FieldSelect>
                  <SearchInput aria-label="Valor" defaultValue="CODLANATIV" />
                  <IconBox aria-label="Pesquisar"><Icon name="search" /></IconBox>
                  <PushButton $on>Ocultar Registros</PushButton>
                  <PushButton>Marcar Registros</PushButton>
                </SearchRow>
                <ToolRow $h={40} $pt={8}><LayoutTools /></ToolRow>
                <GroupPanel $h={29}><span>Arraste aqui o cabeçalho de uma coluna para agrupar</span><Icon name="find" /></GroupPanel>
                <GridArea>
                  <Grid>
                    <colgroup><col width="23" /><col width="42" /><col width="114" /><col width="91" /><col width="353" /><col /></colgroup>
                    <thead>
                      <tr>
                        <th aria-label="Linha atual" /><th>[x]</th><th><SortHead>Código<Icon name="sortUp" /></SortHead></th>
                        <th>Finalidade</th><th>Descrição</th><th>Visível a todas as coligadas</th>
                      </tr>
                    </thead>
                    <tbody>
                      <tr>
                        <td><Icon name="rowMark" /></td><td><Check type="checkbox" aria-label="CODLANATIV" /></td>
                        <td>CODLANATIV</td><NumberCell>3</NumberCell><td>Código de lançamento ativo</td><td>Sim</td>
                      </tr>
                    </tbody>
                  </Grid>
                </GridArea>
                <Footer><Total>0</Total></Footer>
                <Scroll height={14} part={79} />
              </Pane>
              <SidePane>
                <SideHead>
                  <h2>Anexos</h2>
                  <Tool $w={21} aria-label="Fixar"><Icon name="pin" /></Tool>
                  <Tool $w={18} aria-label="Fechar painel"><Icon name="xGray" /></Tool>
                </SideHead>
                <SideTabs><SideTab>Item de tabela Dinamica</SideTab><SideTabRest /></SideTabs>
                <SideFrame>
                  <SideInner>
                    <ToolRow $h={31}><RecordTools position="1/4" /></ToolRow>
                    <ToolRow $h={25}><LayoutTools /></ToolRow>
                    <GroupPanel $h={32}><span>Arraste aqui o cabeçalho de uma coluna para agrupar</span><Icon name="find" /></GroupPanel>
                    <GridArea>
                      <Grid>
                        <colgroup><col width="23" /><col width="42" /><col width="189" /><col /></colgroup>
                        <thead>
                          <tr><th aria-label="Linha atual" /><th>[x]</th><th><SortHead>Código<Icon name="sortUp" /></SortHead></th><th>Descrição</th></tr>
                        </thead>
                        <tbody>
                          {attachments.map(([code, text], i) => (
                            <tr key={code}>
                              <td>{i === 0 && <Icon name="rowMark" />}</td>
                              <td><Check type="checkbox" aria-label={text} /></td>
                              <td className={i === 0 ? "focus" : undefined}>{code}</td>
                              <td>{text}</td>
                            </tr>
                          ))}
                        </tbody>
                      </Grid>
                    </GridArea>
                    <Footer><Total>0</Total></Footer>
                    <Scroll height={15} part={89} />
                  </SideInner>
                </SideFrame>
              </SidePane>
            </Panes>
          </DocFrame>
        </DocumentArea>
        <Dock><DockTab $h={76} aria-label="Painel lateral" /><DockTab $h={159} aria-label="Painel auxiliar" /></Dock>
      </Desktop>

      <Mark $x={30} $y={22} $w={153} $h={29} />
      <Mark $x={133} $y={52} $w={136} $h={37} />
      <Mark $x={139} $y={254} $w={136} $h={38} />
      <Mark $x={723} $y={247} $w={48} $h={55} />
      <Mark $x={53} $y={322} $w={138} $h={94} />
      <Cursor width="13" height="20" viewBox="0 0 13 20" aria-hidden="true">
        <path d="M1 1v16l4-3.500 2.500 5.500 2.500-1-2.500-5.500H12z" fill="#fff" stroke="#000" />
      </Cursor>
    </Shell>
  );
}
